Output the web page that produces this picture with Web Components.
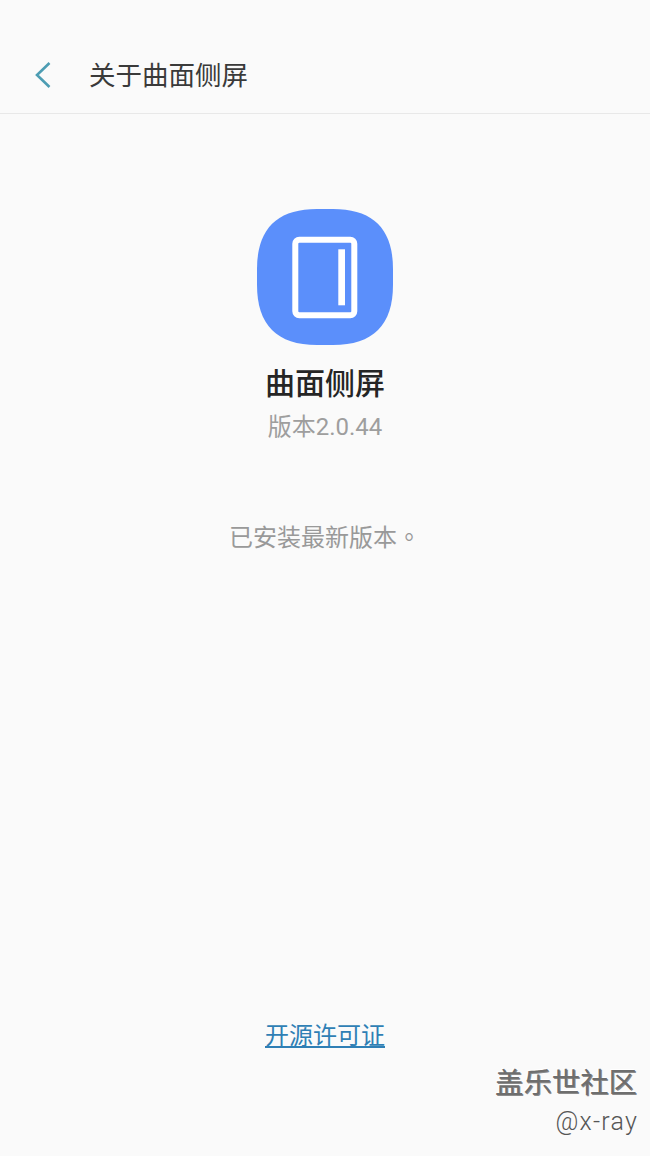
<!DOCTYPE html>
<html lang="zh">
<head>
<meta charset="utf-8">
<title>关于曲面侧屏</title>
<style>
html, body { margin: 0; height: 100%; background: #fafafa; }
body { font-family: Roboto, "Noto Sans CJK SC", sans-serif; }
.dot { font-family: "Noto Sans CJK TC", sans-serif; }
</style>
</head>
<body>
<about-page>
    <app-bar slot="bar">关于曲面侧屏</app-bar>
    <app-info name="曲面侧屏" version="版本2.0.44"></app-info>
    <span slot="status">已安装最新版本<span class="dot" lang="zh-Hant">。</span></span>
    <span slot="link">开源许可证</span>
</about-page>
<water-mark name="盖乐世社区" user="@x-ray"></water-mark>

<script>
(function () {
    class AppBar extends HTMLElement {
        constructor() {
            super();
            const root = this.attachShadow({ mode: 'open' });
            root.innerHTML = `
<style>
:host {
    display: flex;
    align-items: center;
    box-sizing: border-box;
    height: 114px;
    padding: 34px 0 0 33px;
    border-bottom: 1px solid #e8e8e8;
    color: #3a3a3a;
    font-size: 26.5px;
}
svg { display: block; width: 20px; height: 28px; margin: 3px 36px 0 0; }
</style>
<svg viewBox="0 0 20 28"><path d="M16.5 2 L4 14 L16.5 26" fill="none" stroke="#4d9db3" stroke-width="2.6"/></svg>
<slot></slot>`;
        }
    }

    class AppInfo extends HTMLElement {
        constructor() {
            super();
            const root = this.attachShadow({ mode: 'open' });
            root.innerHTML = `
<style>
:host {
    display: flex;
    flex-direction: column;
    align-items: center;
    padding-top: 95px;
}
svg { display: block; width: 136px; height: 136px; }
[name] { margin-top: 20px; font-size: 30px; line-height: 38px; font-weight: 500; color: #252525; }
[version] { margin-top: 8px; font-size: 24px; line-height: 32px; color: #9e9e9e; }
</style>
<svg viewBox="0 0 136 136">
    <path d="M60 0 L76 0 C116 0 136 20 136 60 L136 76 C136 116 116 136 76 136 L60 136 C20 136 0 116 0 76 L0 60 C0 20 20 0 60 0 Z" fill="#5b8ffb"/>
    <rect x="38.3" y="30.7" width="59" height="75.5" rx="4" fill="none" stroke="#fff" stroke-width="6"/>
    <rect x="81.3" y="40.3" width="6.7" height="56" fill="#fff"/>
</svg>
<div name></div>
<div version></div>`;
            root.querySelector('[name]').textContent = this.getAttribute('name');
            root.querySelector('[version]').textContent = this.getAttribute('version');
        }
    }

    class AboutPage extends HTMLElement {
        constructor() {
            super();
            const root = this.attachShadow({ mode: 'open' });
            root.innerHTML = `
<style>
:host {
    display: flex;
    flex-direction: column;
    height: 1156px;
    background: #fafafa;
}
.status {
    margin-top: 77px;
    text-align: center;
    font-size: 24px;
    line-height: 32px;
    color: #999;
}
.link {
    margin-top: auto;
    margin-bottom: 104px;
    text-align: center;
    font-size: 24px;
    line-height: 32px;
    color: #2f7fb5;
    text-decoration: underline;
}
</style>
<slot name="bar"></slot>
<slot></slot>
<div class="status"><slot name="status"></slot></div>
<div class="link"><slot name="link"></slot></div>`;
        }
    }

    class WaterMark extends HTMLElement {
        constructor() {
            super();
            const root = this.attachShadow({ mode: 'open' });
            root.innerHTML = `
<style>
:host {
    position: absolute;
    right: 13px;
    top: 1066px;
    display: flex;
    flex-direction: column;
    align-items: flex-end;
}
[name] { font-size: 28.4px; line-height: 36px; font-weight: 400; color: #6e6e6e; text-shadow: 1px 1px 0 #8a8a8a, -1px -1px 0 #fff; }
[user] { margin: 3px -1px 0 0; font-size: 25px; line-height: 34px; font-weight: 300; letter-spacing: 1.2px; color: #555; }
</style>
<div name></div>
<div user></div>`;
            root.querySelector('[name]').textContent = this.getAttribute('name');
            root.querySelector('[user]').textContent = this.getAttribute('user');
        }
    }

    customElements.define('app-bar', AppBar);
    customElements.define('app-info', AppInfo);
    customElements.define('about-page', AboutPage);
    customElements.define('water-mark', WaterMark);
})();
</script>
</body>
</html>
